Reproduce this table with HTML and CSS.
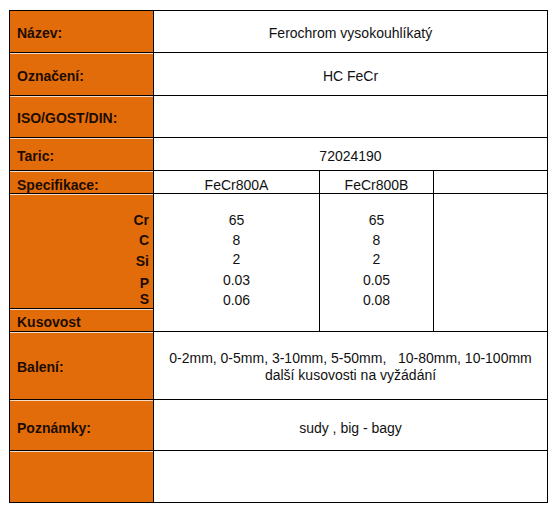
FILE: index.html
```html
<!DOCTYPE html>
<html lang="cs">
<head>
<meta charset="utf-8">
<title>Ferochrom vysokouhlíkatý</title>
<link rel="stylesheet" href="styles.css">
</head>
<body>
<table class="spec">
  <colgroup>
    <col class="c1"><col class="c2"><col class="c3"><col class="c4">
  </colgroup>
  <tr class="r-nazev">
    <th class="lab">Název:</th>
    <td class="val" colspan="3">Ferochrom vysokouhlíkatý</td>
  </tr>
  <tr class="r-ozn">
    <th class="lab">Označení:</th>
    <td class="val" colspan="3">HC FeCr</td>
  </tr>
  <tr class="r-iso">
    <th class="lab">ISO/GOST/DIN:</th>
    <td class="val" colspan="3"></td>
  </tr>
  <tr class="r-taric">
    <th class="lab">Taric:</th>
    <td class="val" colspan="3">72024190</td>
  </tr>
  <tr class="r-spec">
    <th class="lab">Specifikace:</th>
    <td class="val">FeCr800A</td>
    <td class="val">FeCr800B</td>
    <td class="val"></td>
  </tr>
  <tr class="r-chem">
    <th class="lab chem-lab">
      <div class="elist"><span>Cr</span><span>C</span><span>Si</span><span>P</span><span>S</span></div>
    </th>
    <td class="val chem" rowspan="2">
      <div class="vlist"><span>65</span><span>8</span><span>2</span><span>0.03</span><span>0.06</span></div>
    </td>
    <td class="val chem" rowspan="2">
      <div class="vlist"><span>65</span><span>8</span><span>2</span><span>0.05</span><span>0.08</span></div>
    </td>
    <td class="val chem" rowspan="2"></td>
  </tr>
  <tr class="r-kus">
    <th class="lab">Kusovost</th>
  </tr>
  <tr class="r-bal">
    <th class="lab">Balení:</th>
    <td class="val multi" colspan="3">0-2mm, 0-5mm, 3-10mm, 5-50mm,&nbsp;&nbsp; 10-80mm, 10-100mm<br>další kusovosti na vyžádání</td>
  </tr>
  <tr class="r-pozn">
    <th class="lab">Poznámky:</th>
    <td class="val" colspan="3">sudy , big - bagy</td>
  </tr>
  <tr class="r-last">
    <th class="lab"></th>
    <td class="val" colspan="3"></td>
  </tr>
</table>
</body>
</html>
```

FILE: styles.css
```css
html, body {
  margin: 0;
  padding: 0;
  background: #ffffff;
}

body {
  padding: 10px 0 0 9px;
  font-family: "Liberation Sans", Arial, sans-serif;
  font-size: 14px;
  color: #111111;
}

.spec {
  border-collapse: collapse;
  table-layout: fixed;
  width: 539px;
}

.c1 { width: 144px; }
.c2 { width: 166px; }
.c3 { width: 114px; }
.c4 { width: 114px; }

.spec th,
.spec td {
  border: 1px solid #000000;
  padding: 3px 0 0 0;
  vertical-align: middle;
  line-height: 16px;
}

.spec .lab {
  background: #e36c0a;
  color: #1c0c00;
  font-weight: bold;
  text-align: left;
  padding-left: 7px;
}

.spec tr + tr .lab {
  box-shadow: inset 0 1px 0 #f6dcc4;
}

.spec .val {
  background: #ffffff;
  text-align: center;
  font-weight: normal;
}

.r-nazev { height: 42px; }
.r-ozn { height: 43px; }
.r-iso { height: 42px; }
.r-taric { height: 33px; }
.r-spec { height: 23px; }
.r-chem { height: 115px; }
.r-kus { height: 23px; }
.r-bal { height: 68px; }
.r-pozn { height: 51px; }
.r-last { height: 52px; }

.spec .r-spec th,
.spec .r-spec td {
  padding-top: 6px;
}

.spec .r-pozn th,
.spec .r-pozn td {
  padding-top: 6px;
}

.spec .chem-lab,
.spec .chem {
  vertical-align: top;
  padding-top: 16px;
}

.elist {
  display: grid;
  grid-template-rows: 20px 20px 22px 22px 10px;
  justify-items: end;
  padding-right: 4px;
}

.elist span,
.vlist span {
  display: flex;
  align-items: center;
  line-height: 16px;
}

.vlist {
  display: grid;
  grid-template-rows: 20px 19px 20px 21px 19px;
  justify-items: center;
}

.spec .multi {
  line-height: 17px;
}
```
